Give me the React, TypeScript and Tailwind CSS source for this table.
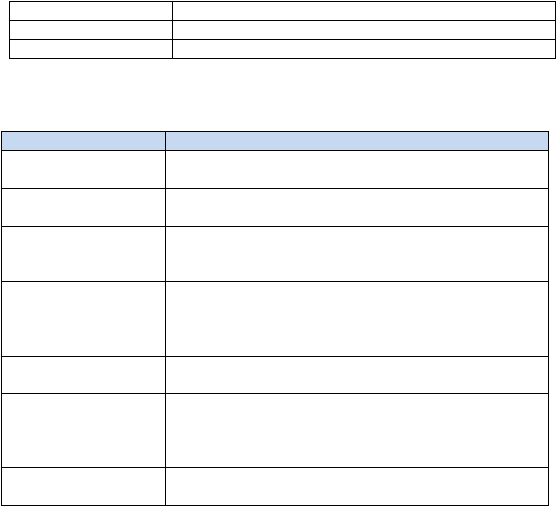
import React from 'react';

const topRows = [18, 18, 18];
const mainRows = [37, 37, 54, 74, 36, 73, 37];

const App: React.FC = () => {
  return (
    <div className="w-[557px] h-[508px] bg-white overflow-hidden" style={{ fontFamily: '"Liberation Sans", Arial, sans-serif' }}>
      <div className="ml-[9px] mt-[1px] w-[547px] border border-black">
        {topRows.map((h, i) => (
          <div key={i} className={`flex ${i > 0 ? 'border-t border-black' : ''}`} style={{ height: h + (i > 0 ? 1 : 0) }}>
            <div className="w-[163px] border-r border-black"></div>
            <div className="flex-1"></div>
          </div>
        ))}
      </div>

      <div className="ml-[1px] mt-[72px] w-[548px] border border-black">
        <div className="flex h-[18px] bg-[#c6d9f1]">
          <div className="w-[164px] border-r border-black"></div>
          <div className="flex-1"></div>
        </div>
        {mainRows.map((h, i) => (
          <div key={i} className="flex border-t border-black" style={{ height: h + 1 }}>
            <div className="w-[164px] border-r border-black"></div>
            <div className="flex-1"></div>
          </div>
        ))}
      </div>
    </div>
  );
};

export default App;
